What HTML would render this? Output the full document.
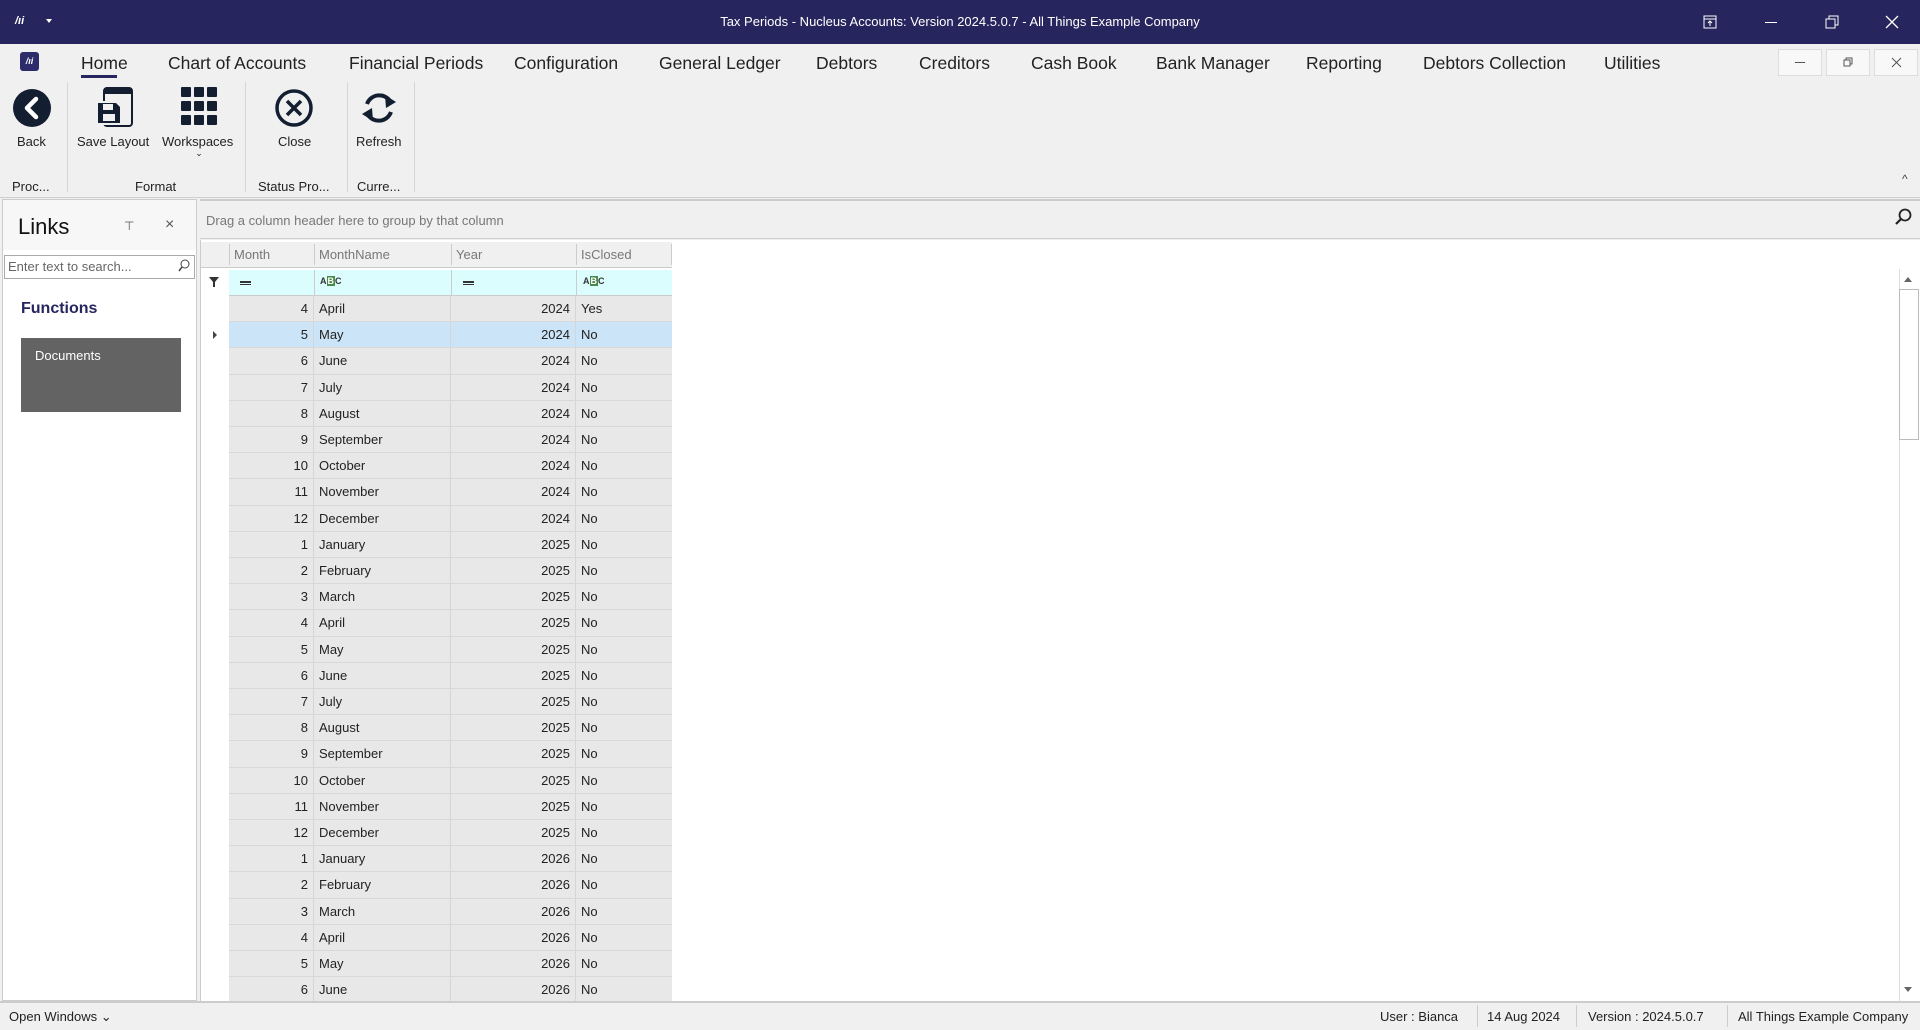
<!DOCTYPE html>
<html><head><meta charset="utf-8"><style>
*{box-sizing:border-box;margin:0;padding:0}
body{width:1920px;height:1030px;overflow:hidden;background:#f0f0f0;font-family:"Liberation Sans",sans-serif;font-size:13px;color:#222;position:relative}
.abs{position:absolute}
#title{left:0;top:0;width:1920px;height:44px;background:#27255e;color:#fff}
#menu span{position:absolute;top:53px;font-size:17.5px;color:#222}
.rl{position:absolute;font-size:13px;color:#222;text-align:center;white-space:nowrap}
.sep{position:absolute;top:82px;width:1px;height:110px;background:#d6d6d6}
.row{position:absolute;left:229px;width:443px;height:26.2px;background:#e8e8e8;border-bottom:1px solid #d8d8d8}
.row div{position:absolute;top:0;height:100%;line-height:25px;border-right:1px solid #d6d6d6;padding:0 5px}
.c1{left:0;width:85px;text-align:right}
.c2{left:85px;width:137px}
.c3{left:222px;width:125px;text-align:right}
.c4{left:347px;width:96px;border-right:none!important}
.sel{background:#cce4f7}
.wb{position:absolute;top:49px;width:44px;height:27px;background:#f8f8f8;border:1px solid #ddd}
.abc{position:absolute;font-size:9px;font-weight:bold;color:#333}
</style></head><body>
<div id="title" class="abs">
 <div class="abs" style="left:15px;top:15px;font-size:11px;font-weight:bold;font-style:italic">/ıi</div>
 <div class="abs" style="left:46px;top:19px;width:0;height:0;border-left:3px solid transparent;border-right:3px solid transparent;border-top:4px solid #fff"></div>
 <div class="abs" style="left:0;width:1920px;top:14px;text-align:center;font-size:13px">Tax Periods - Nucleus Accounts: Version 2024.5.0.7 - All Things Example Company</div>
 <svg class="abs" style="left:1703px;top:15px" width="14" height="14"><rect x="1" y="1" width="12" height="12" fill="none" stroke="#fff"/><line x1="1" y1="4" x2="13" y2="4" stroke="#fff"/><path d="M7 11V6M5 8l2-2 2 2" stroke="#fff" fill="none"/></svg>
 <div class="abs" style="left:1765px;top:22px;width:12px;height:1px;background:#fff"></div>
 <svg class="abs" style="left:1825px;top:15px" width="14" height="14"><rect x="1" y="4" width="9" height="9" fill="none" stroke="#fff"/><path d="M4 4V1h9v9h-3" fill="none" stroke="#fff"/></svg>
 <svg class="abs" style="left:1885px;top:15px" width="14" height="14"><path d="M1 1L13 13M13 1L1 13" stroke="#fff" stroke-width="1.3"/></svg>
</div>
<div class="abs" style="left:20px;top:52px;width:19px;height:19px;background:#2e2b6b;border-radius:3px;color:#fff;font-size:9px;font-weight:bold;font-style:italic;text-align:center;line-height:19px">/ıi</div>
<div id="menu">
<span style="left:81px">Home</span><span style="left:168px">Chart of Accounts</span><span style="left:349px">Financial Periods</span><span style="left:514px">Configuration</span><span style="left:659px">General Ledger</span><span style="left:816px">Debtors</span><span style="left:919px">Creditors</span><span style="left:1031px">Cash Book</span><span style="left:1156px">Bank Manager</span><span style="left:1306px">Reporting</span><span style="left:1423px">Debtors Collection</span><span style="left:1604px">Utilities</span>
</div>
<div class="abs" style="left:81px;top:75px;width:36px;height:3px;background:#27255e"></div>
<div class="wb" style="left:1778px"></div>
<div class="wb" style="left:1826px"></div>
<div class="wb" style="left:1874px"></div>
<div class="abs" style="left:1795px;top:62px;width:10px;height:1px;background:#555"></div>
<svg class="abs" style="left:1843px;top:57px" width="10" height="10"><rect x="1" y="3" width="6" height="6" fill="none" stroke="#555"/><path d="M3 3V1h6v6H7" fill="none" stroke="#555"/></svg>
<svg class="abs" style="left:1891px;top:57px" width="11" height="11"><path d="M1 1L10 10M10 1L1 10" stroke="#555"/></svg>
<!-- ribbon icons -->
<svg class="abs" style="left:12px;top:88px" width="40" height="40"><circle cx="20" cy="20" r="19" fill="#131f30"/><path d="M24 11L15 20L24 29" stroke="#fff" stroke-width="4.5" fill="none" stroke-linecap="round" stroke-linejoin="round"/></svg>
<svg class="abs" style="left:96px;top:87px" width="40" height="40"><rect x="8" y="1" width="28" height="38" rx="3" fill="none" stroke="#131f30" stroke-width="2"/><rect x="8" y="1" width="28" height="6" fill="#131f30"/><rect x="2" y="14" width="24" height="24" fill="#f0f0f0"/><path d="M2 16h18l4 4v16H2z" fill="#131f30"/><rect x="7" y="17" width="10" height="6" fill="#f0f0f0"/><rect x="7" y="27" width="12" height="7" fill="#f0f0f0"/></svg>
<svg class="abs" style="left:179px;top:86px" width="38" height="42"><g fill="#131f30"><rect x="2" y="1" width="10" height="10" rx="1"/><rect x="15" y="1" width="10" height="10" rx="1"/><rect x="28" y="1" width="10" height="10" rx="1"/><rect x="2" y="15" width="10" height="10" rx="1"/><rect x="15" y="15" width="10" height="10" rx="1"/><rect x="28" y="15" width="10" height="10" rx="1"/><rect x="2" y="29" width="10" height="10" rx="1"/><rect x="15" y="29" width="10" height="10" rx="1"/><rect x="28" y="29" width="10" height="10" rx="1"/></g></svg>
<svg class="abs" style="left:274px;top:88px" width="40" height="40"><circle cx="20" cy="20" r="17" fill="none" stroke="#131f30" stroke-width="3.5"/><path d="M13 13L27 27M27 13L13 27" stroke="#131f30" stroke-width="3.5"/></svg>
<svg class="abs" style="left:359px;top:90px" width="40" height="36"><path d="M8 14A13 13 0 0 1 31 11" stroke="#131f30" stroke-width="4" fill="none"/><path d="M26 5L37 12L27 18z" fill="#131f30"/><path d="M32 22A13 13 0 0 1 9 25" stroke="#131f30" stroke-width="4" fill="none"/><path d="M14 31L3 24L13 18z" fill="#131f30"/></svg>
<div class="rl" style="left:17px;top:134px">Back</div>
<div class="rl" style="left:77px;top:134px">Save Layout</div>
<div class="rl" style="left:162px;top:134px">Workspaces</div>
<div class="rl" style="left:193px;top:148px;width:12px;font-size:9px">⌄</div>
<div class="rl" style="left:278px;top:134px">Close</div>
<div class="rl" style="left:356px;top:134px">Refresh</div>
<div class="rl" style="left:12px;top:179px">Proc...</div>
<div class="rl" style="left:135px;top:179px">Format</div>
<div class="rl" style="left:258px;top:179px">Status Pro...</div>
<div class="rl" style="left:357px;top:179px">Curre...</div>
<div class="sep" style="left:67px"></div><div class="sep" style="left:245px"></div><div class="sep" style="left:347px"></div><div class="sep" style="left:414px"></div>
<div class="abs" style="left:1902px;top:172px;font-size:12px;color:#444">^</div>
<div class="abs" style="left:0;top:197px;width:1920px;height:1px;background:#cfcfcf"></div>
<!-- left panel -->
<div class="abs" style="left:2px;top:199px;width:195px;height:802px;background:#fff;border:1px solid #ccc"></div>
<div class="abs" style="left:3px;top:200px;width:193px;height:50px;background:#f7f7f7"></div>
<div class="abs" style="left:18px;top:214px;font-size:22px;color:#111">Links</div>
<div class="abs" style="left:124px;top:219px;font-size:12px;color:#555">⊤</div>
<div class="abs" style="left:165px;top:216px;font-size:16px;color:#555">×</div>
<div class="abs" style="left:4px;top:255px;width:191px;height:24px;border:1px solid #aaa;background:#fff;color:#666;padding:3px 3px;font-size:13px">Enter text to search...</div>
<svg class="abs" style="left:178px;top:259px" width="12" height="14"><circle cx="7" cy="5" r="4" fill="none" stroke="#444"/><path d="M4 8L1 12" stroke="#444" stroke-width="1.5"/></svg>
<div class="abs" style="left:21px;top:300px;font-size:16px;font-weight:bold;color:#27255e">Functions</div>
<div class="abs" style="left:21px;top:338px;width:160px;height:74px;background:#636363;color:#fff;padding:10px 14px;font-size:13px">Documents</div>
<!-- grid area -->
<div class="abs" style="left:200px;top:199px;width:1720px;height:40px;background:#f0f0f0;border-top:2px solid #ccc;border-bottom:1px solid #d0d0d0"></div>
<div class="abs" style="left:206px;top:213px;color:#777;font-size:13px">Drag a column header here to group by that column</div>
<svg class="abs" style="left:1894px;top:208px" width="18" height="18"><circle cx="11" cy="7" r="5.5" fill="none" stroke="#222" stroke-width="1.8"/><path d="M7 11L2 16" stroke="#222" stroke-width="2.2"/></svg>
<div class="abs" style="left:200px;top:240px;width:1720px;height:762px;background:#fff;border-left:1px solid #ccc"></div>
<div class="abs" style="left:201px;top:242px;width:471px;height:26px;background:#f0f0f0;border-bottom:1px solid #ccc"></div>
<div class="abs" style="left:229px;top:244px;height:21px;width:1px;background:#ccc"></div>
<div class="abs" style="left:314px;top:244px;height:21px;width:1px;background:#ccc"></div>
<div class="abs" style="left:451px;top:244px;height:21px;width:1px;background:#ccc"></div>
<div class="abs" style="left:576px;top:244px;height:21px;width:1px;background:#ccc"></div>
<div class="abs" style="left:671px;top:244px;height:21px;width:1px;background:#ccc"></div>
<div class="abs" style="left:234px;top:247px;color:#777">Month</div>
<div class="abs" style="left:319px;top:247px;color:#777">MonthName</div>
<div class="abs" style="left:456px;top:247px;color:#777">Year</div>
<div class="abs" style="left:581px;top:247px;color:#777">IsClosed</div>
<div class="abs" style="left:229px;top:270px;width:443px;height:26px;background:#dcfdfd;border-bottom:1px solid #ccc"></div>
<div class="abs" style="left:314px;top:270px;height:26px;width:1px;background:#ccc"></div>
<div class="abs" style="left:451px;top:270px;height:26px;width:1px;background:#ccc"></div>
<div class="abs" style="left:576px;top:270px;height:26px;width:1px;background:#ccc"></div>
<svg class="abs" style="left:209px;top:277px" width="10" height="10"><path d="M0 0h10L6 5v5H4V5z" fill="#333"/></svg>
<div class="abs" style="left:240px;top:281px;width:11px;height:4px;border-top:2px solid #333;border-bottom:1px solid #333"></div>
<div class="abs" style="left:463px;top:281px;width:11px;height:4px;border-top:2px solid #333;border-bottom:1px solid #333"></div>
<div class="abc" style="left:320px;top:276px">A<span style="background:#4a8a4a;color:#fff;padding:0 1px">B</span>C</div>
<div class="abc" style="left:583px;top:276px">A<span style="background:#4a8a4a;color:#fff;padding:0 1px">B</span>C</div>
<div class="abs" style="left:213px;top:331px;width:0;height:0;border-top:4px solid transparent;border-bottom:4px solid transparent;border-left:4px solid #444"></div>
<div id="rows"></div>
<!-- scrollbar -->
<div class="abs" style="left:1899px;top:269px;width:20px;height:733px;background:#fff;border-left:1px solid #ddd"></div>
<div class="abs" style="left:1904px;top:277px;width:0;height:0;border-left:4px solid transparent;border-right:4px solid transparent;border-bottom:5px solid #666"></div>
<div class="abs" style="left:1899px;top:289px;width:20px;height:151px;background:#fff;border:1px solid #bbb"></div>
<div class="abs" style="left:1904px;top:987px;width:0;height:0;border-left:4px solid transparent;border-right:4px solid transparent;border-top:5px solid #666"></div>
<div class="abs" style="left:0;top:1001px;width:1920px;height:29px;background:#f0f0f0;border-top:2px solid #ccc"></div>
<!-- status -->
<div class="abs" style="left:9px;top:1009px;font-size:13px">Open Windows ⌄</div>
<div class="abs" style="left:1380px;top:1009px;font-size:13px">User : Bianca</div>
<div class="abs" style="left:1477px;top:1005px;width:1px;height:22px;background:#ccc"></div>
<div class="abs" style="left:1487px;top:1009px;font-size:13px">14 Aug 2024</div>
<div class="abs" style="left:1576px;top:1005px;width:1px;height:22px;background:#ccc"></div>
<div class="abs" style="left:1588px;top:1009px;font-size:13px">Version : 2024.5.0.7</div>
<div class="abs" style="left:1727px;top:1005px;width:1px;height:22px;background:#ccc"></div>
<div class="abs" style="left:1738px;top:1009px;font-size:13px">All Things Example Company</div>
<script>
var m=["January","February","March","April","May","June","July","August","September","October","November","December"];
var h="";
for(var k=0;k<27;k++){var mi=(3+k)%12,y=2024+Math.floor((3+k)/12);
h+='<div class="row'+(k==1?' sel':'')+'" style="top:'+(296+k*26.2)+'px"><div class="c1">'+(mi+1)+'</div><div class="c2">'+m[mi]+'</div><div class="c3">'+y+'</div><div class="c4">'+(k==0?'Yes':'No')+'</div></div>';}
document.getElementById('rows').innerHTML=h;
</script>
</body></html>
